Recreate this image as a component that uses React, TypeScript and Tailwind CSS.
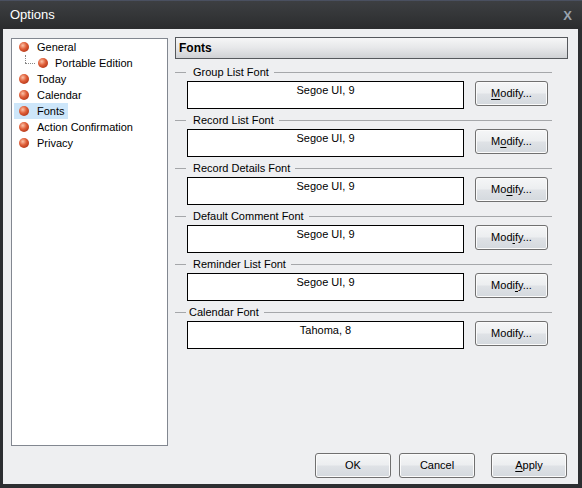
import React from 'react';

const font = { fontFamily: '"Liberation Sans", Arial, sans-serif' };

const Bullet: React.FC = () => (
  <span className="inline-block w-[10px] h-[10px] rounded-full shrink-0 bg-[radial-gradient(circle_at_38%_35%,#fbc2a8_0%,#e0603a_40%,#b8391a_75%,#8a2a12_100%)]" />
);

const treeItems = [
  { label: 'General' },
  { label: 'Portable Edition', child: true },
  { label: 'Today' },
  { label: 'Calendar' },
  { label: 'Fonts', selected: true },
  { label: 'Action Confirmation' },
  { label: 'Privacy' },
];

// Underlined access key per button label
const fontGroups = [
  { label: 'Group List Font', value: 'Segoe UI, 9', key: 0 },
  { label: 'Record List Font', value: 'Segoe UI, 9', key: 1 },
  { label: 'Record Details Font', value: 'Segoe UI, 9', key: 2 },
  { label: 'Default Comment Font', value: 'Segoe UI, 9', key: 3 },
  { label: 'Reminder List Font', value: 'Segoe UI, 9', key: 4 },
  { label: 'Calendar Font', value: 'Tahoma, 8', key: -1 },
];

const btnClass =
  'flex items-center justify-center border border-[#707070] rounded-[3px] text-[11px] text-black shadow-[inset_0_0_0_1px_#fbfbfb] bg-[linear-gradient(to_bottom,#f5f6f7_0%,#eceef0_48%,#dfe2e6_52%,#d4d9de_100%)]';

const Label: React.FC<{ text: string; k: number }> = ({ text, k }) => {
  if (k < 0) return <>{text}</>;
  return (
    <>
      {text.slice(0, k)}
      <u className="underline-offset-2">{text[k]}</u>
      {text.slice(k + 1)}
    </>
  );
};

export default function App() {
  return (
    <div style={font} className="w-[582px] h-[488px] bg-[#2c2e31] flex flex-col overflow-hidden select-none">
      {/* Title bar */}
      <div className="h-[29px] shrink-0 flex items-center justify-between pl-[10px] pr-[10px] border-t border-[#4a5060] bg-[linear-gradient(to_bottom,#3d3f42_0%,#343638_50%,#2b2c2e_100%)]">
        <span className="text-white text-[13px]">Options</span>
        <span className="text-[#9aa3ae] text-[13px] font-bold leading-none">X</span>
      </div>

      {/* Client area */}
      <div className="ml-[3px] mr-[4px] mb-[4px] flex-1 bg-[#eeeff1] flex flex-col pt-[8px] pl-[8px] pr-[10px]">
        <div className="flex gap-[7px] h-[409px]">
          {/* Tree */}
          <div className="mt-[1px] w-[157px] h-[408px] bg-white border border-[#828790]">
            {treeItems.map((it) => (
              <div key={it.label} className="h-[16px] flex items-center text-[11px] text-black">
                {it.child ? (
                  <div className="flex items-center h-full">
                    <div className="relative w-[26px] h-full">
                      <div className="absolute left-[13px] top-0 h-[8px] border-l border-dotted border-[#888]" />
                      <div className="absolute left-[13px] top-[8px] w-[10px] border-t border-dotted border-[#888]" />
                    </div>
                    <Bullet />
                    <span className="ml-[7px]">{it.label}</span>
                  </div>
                ) : (
                  <div
                    className={
                      'flex items-center h-full ml-[2px] pl-[5px] pr-[3px] ' +
                      (it.selected ? 'bg-[#cde6fa]' : '')
                    }
                  >
                    <Bullet />
                    <span className="ml-[8px]">{it.label}</span>
                  </div>
                )}
              </div>
            ))}
          </div>

          {/* Right panel */}
          <div className="w-[393px] flex flex-col">
            <div className="h-[22px] border border-[#55585c] flex items-center pl-[3px] text-[12px] font-bold text-black bg-[linear-gradient(to_bottom,#f6f6f7_0%,#e6e7e9_50%,#cfd1d4_100%)]">
              Fonts
            </div>
            <div className="pt-[6px] flex flex-col">
              {fontGroups.map((g) => (
                <div key={g.label} className="flex flex-col h-[48px]">
                  <div className="h-[14px] flex items-center text-[11px] text-black pr-[16px]">
                    <div className="w-[11px] border-t border-[#a5a7aa]" />
                    <span className={g.key < 0 ? 'pl-[3px] pr-[5px]' : 'pl-[7px] pr-[5px]'}>{g.label}</span>
                    <div className="flex-1 border-t border-[#a5a7aa]" />
                  </div>
                  <div className="mt-[2px] flex items-start">
                    <div className="ml-[12px] w-[277px] h-[28px] bg-white border border-black text-center text-[11px] text-black pt-[1px] leading-[14px]">
                      {g.value}
                    </div>
                    <button className={btnClass + ' ml-[11px] w-[73px] h-[25px]'}>
                      <Label text="Modify..." k={g.key} />
                    </button>
                  </div>
                </div>
              ))}
            </div>
          </div>
        </div>

        {/* Dialog buttons */}
        <div className="mt-[7px] flex justify-end pr-[1px]">
          <button className={btnClass + ' w-[76px] h-[25px]'}>OK</button>
          <button className={btnClass + ' ml-[8px] w-[76px] h-[25px]'}>Cancel</button>
          <button className={btnClass + ' ml-[16px] w-[76px] h-[25px]'}>
            <Label text="Apply" k={0} />
          </button>
        </div>
      </div>
    </div>
  );
}
